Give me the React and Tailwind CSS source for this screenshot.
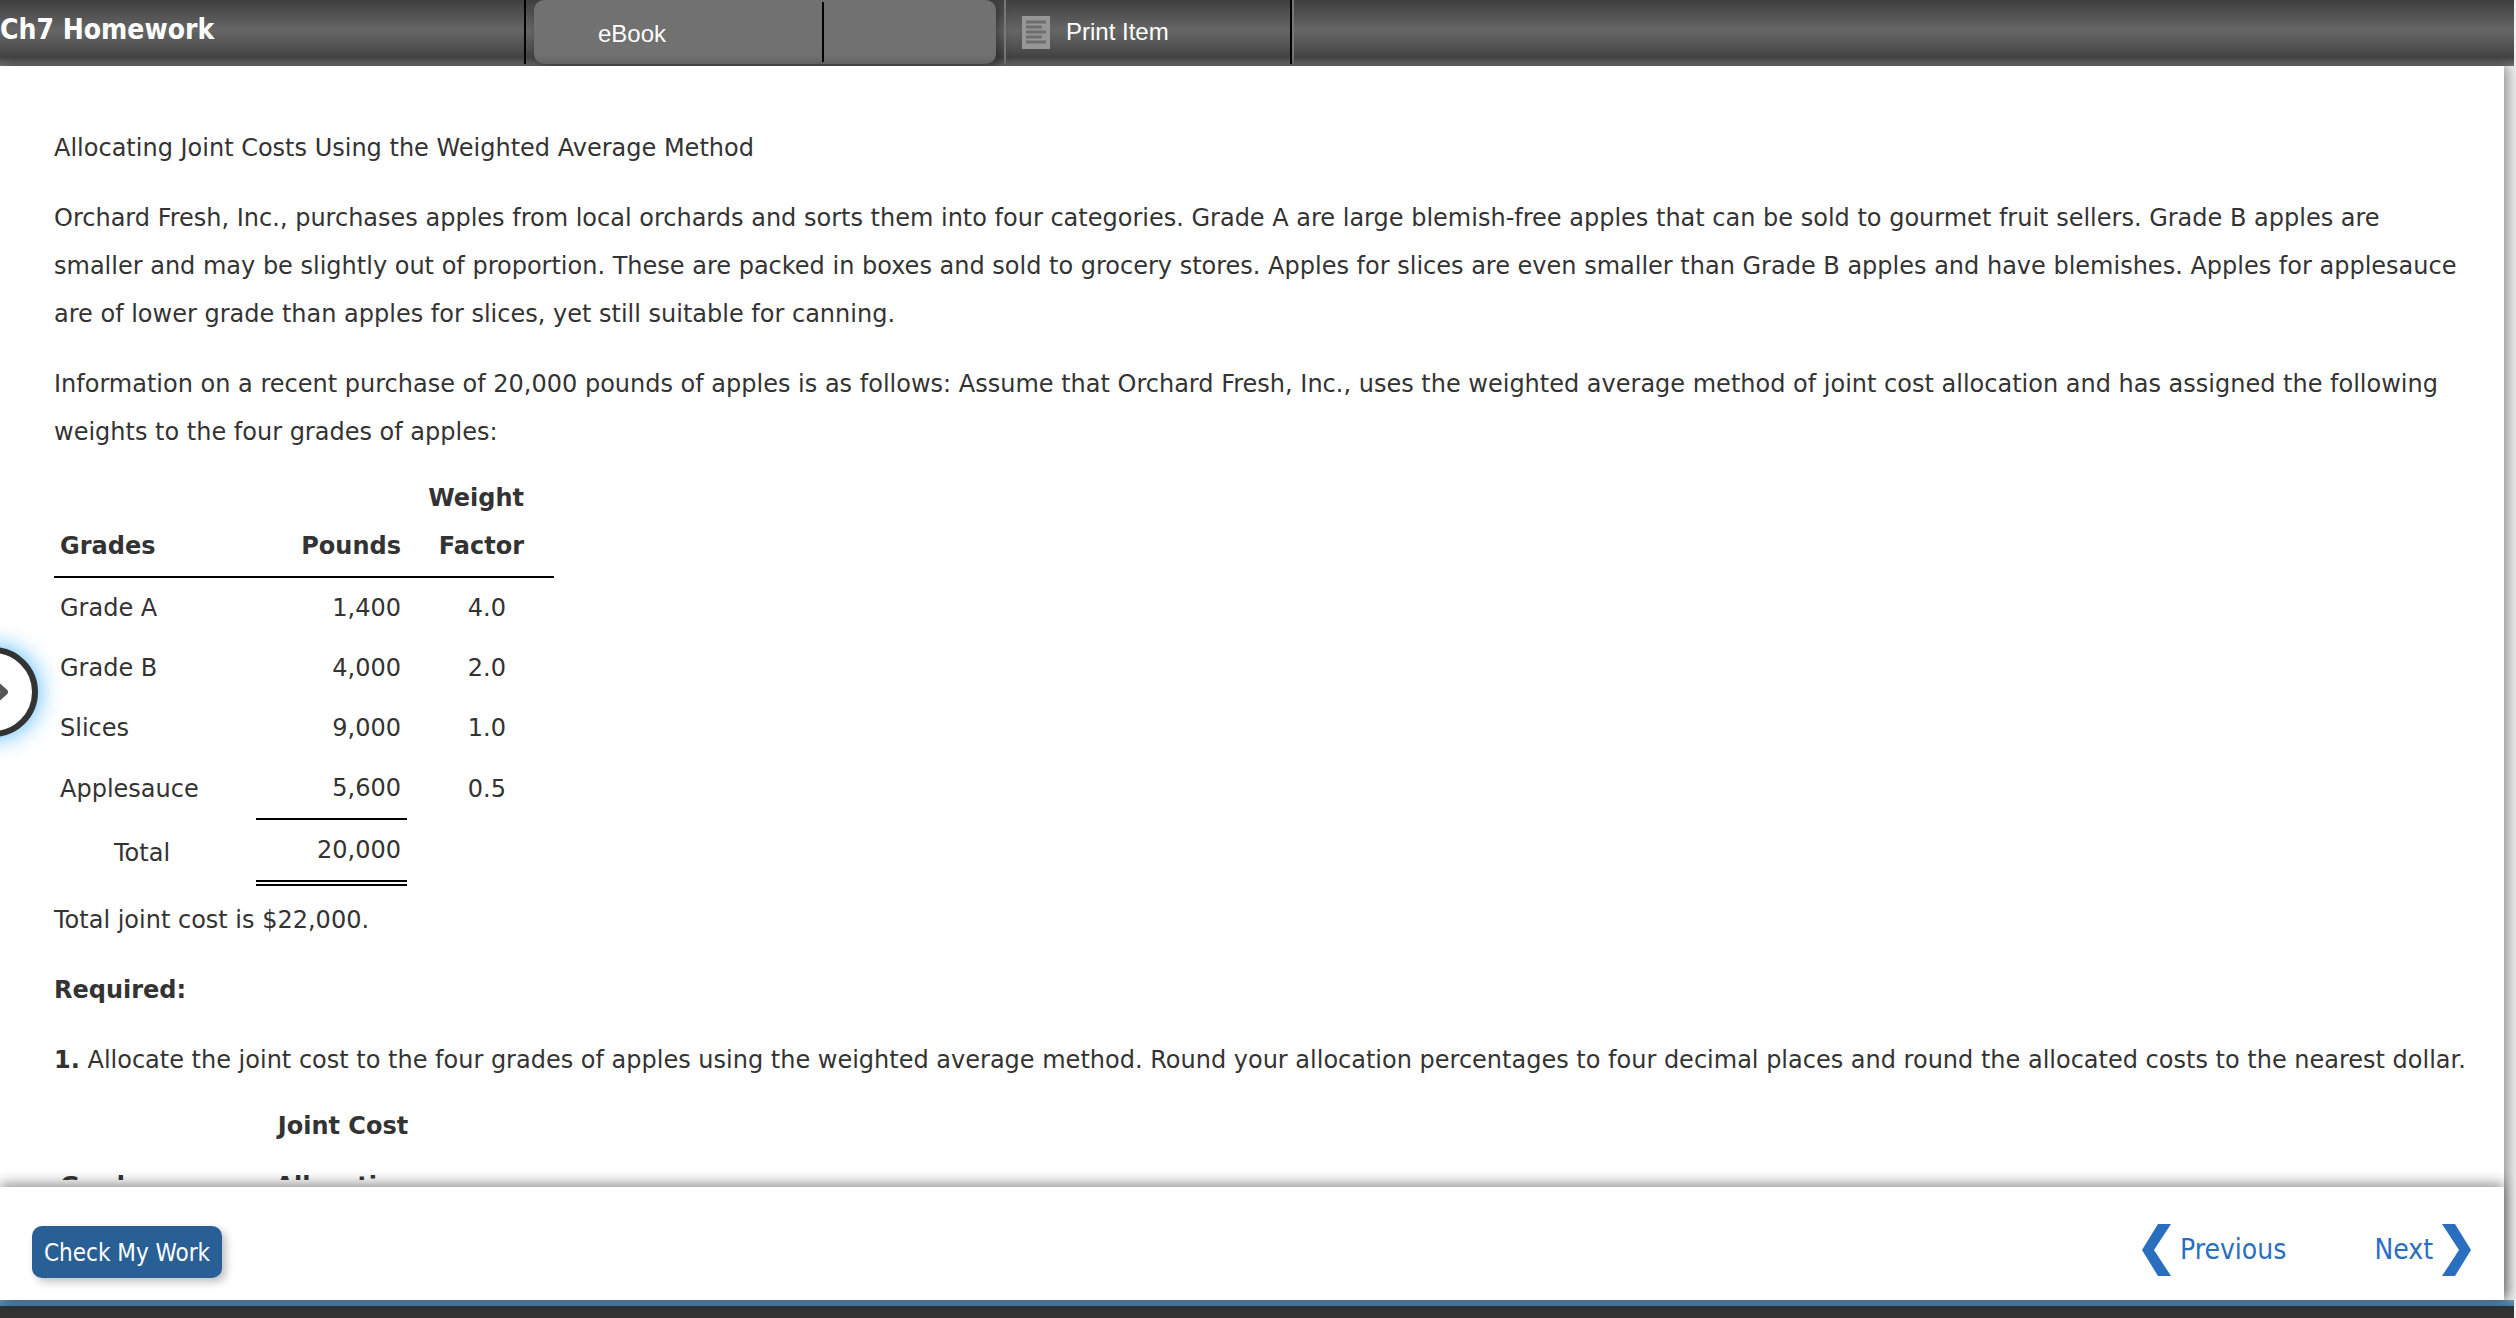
const GRADES = [
  { name: "Grade A", pounds: "1,400", weight: "4.0" },
  { name: "Grade B", pounds: "4,000", weight: "2.0" },
  { name: "Slices", pounds: "9,000", weight: "1.0" },
];

function PageIcon() {
  return (
    <svg viewBox="0 0 28 33" className="w-7 h-[33px]" aria-hidden="true">
      <rect width="28" height="33" fill="#979797" />
      <path d="M4 6h20M4 11h16M4 16h20M4 21h16M4 26h20" stroke="#6e6e6e" strokeWidth="3" fill="none" />
    </svg>
  );
}

function Chevron({ flip = false }) {
  return (
    <svg viewBox="0 0 29 52" className="w-[29px] h-[52px]" aria-hidden="true">
      <path d={flip ? "M0 0h13l16 26-16 26H0l17-26z" : "M29 0H16L0 26l16 26h13L12 26z"} fill="#2a6ebf" />
    </svg>
  );
}

function Header() {
  return (
    <header className="flex h-[66px] shrink-0 mr-[2px] bg-[linear-gradient(#3f3f3f_0%,#666_46%,#444_87%,#757575_100%)] text-white">
      <h1 className="w-[524px] pt-2 text-[28px] leading-[44px] font-bold font-['DejaVu_Sans_Condensed','DejaVu_Sans',sans-serif]">
        Ch7 Homework
      </h1>
      <nav className="flex h-16 text-2xl font-['Liberation_Sans',Arial,sans-serif]">
        <div className="flex border-l-2 border-black pl-2">
          <div className="flex w-[462px] rounded-[10px] bg-[#717171] shadow-[4px_4px_10px_rgba(0,0,0,0.35)]">
            <button type="button" className="w-[290px] my-[2px] pl-16 pt-1 text-left border-r-2 border-black">
              eBook
            </button>
          </div>
        </div>
        <button
          type="button"
          className="flex items-center w-[288px] ml-2 pl-4 gap-4 border-l-2 border-l-[#777] border-r-2 border-r-black"
        >
          <PageIcon />
          Print Item
        </button>
        <div className="border-l-2 border-[#777]" />
      </nav>
    </header>
  );
}

function GradesTable() {
  return (
    <table className="w-[500px] table-fixed border-collapse">
      <colgroup>
        <col className="w-[202px]" />
        <col className="w-[151px]" />
        <col />
      </colgroup>
      <thead>
        <tr className="align-bottom border-b-2 border-black">
          <th className="px-[6px] pb-[6px] text-left">Grades</th>
          <th className="px-[6px] pb-[6px] text-right">Pounds</th>
          <th className="pr-[30px] pb-[6px] text-right">
            Weight
            <br />
            Factor
          </th>
        </tr>
      </thead>
      <tbody className="text-right">
        {GRADES.map((g) => (
          <tr key={g.name}>
            <td className="px-[6px] py-[6px] text-left">{g.name}</td>
            <td className="px-[6px] py-[6px]">{g.pounds}</td>
            <td className="pr-12 py-[6px]">{g.weight}</td>
          </tr>
        ))}
        <tr>
          <td className="px-[6px] py-[6px] text-left">Applesauce</td>
          <td className="px-[6px] py-[6px] border-b-2 border-black">5,600</td>
          <td className="pr-12 py-[6px]">0.5</td>
        </tr>
        <tr>
          <td className="pl-[60px] py-[6px] text-left align-bottom">Total</td>
          <td className="px-[6px] py-[6px] border-b-6 border-double border-black">20,000</td>
          <td />
        </tr>
      </tbody>
    </table>
  );
}

export default function App() {
  return (
    <div className="flex flex-col h-screen overflow-hidden bg-[#f0f0f0] text-2xl text-[#333] font-['DejaVu_Sans',Verdana,sans-serif]">
      <Header />
      <div className="relative flex flex-col flex-1 min-h-0 mr-3 bg-white shadow-[4px_0_12px_rgba(0,0,0,0.4)]">
        <main className="flex-1 min-h-0 overflow-hidden pt-[58px] pl-[54px] pr-8 mb-[7px] leading-[48px]">
          <p className="mb-[22px]">Allocating Joint Costs Using the Weighted Average Method</p>
          <p className="mb-[22px]">
            Orchard Fresh, Inc., purchases apples from local orchards and sorts them into four categories. Grade A are
            large blemish-free apples that can be sold to gourmet fruit sellers. Grade B apples are smaller and may be
            slightly out of proportion. These are packed in boxes and sold to grocery stores. Apples for slices are even
            smaller than Grade B apples and have blemishes. Apples for applesauce are of lower grade than apples for
            slices, yet still suitable for canning.
          </p>
          <p className="mb-[18px]">
            Information on a recent purchase of 20,000 pounds of apples is as follows: Assume that Orchard Fresh, Inc.,
            uses the weighted average method of joint cost allocation and has assigned the following weights to the four
            grades of apples:
          </p>
          <GradesTable />
          <p className="mt-[10px] mb-[22px]">Total joint cost is $22,000.</p>
          <p className="mb-[22px] font-bold">Required:</p>
          <p className="mb-[18px]">
            <b>1.</b> Allocate the joint cost to the four grades of apples using the weighted average method. Round your
            allocation percentages to four decimal places and round the allocated costs to the nearest dollar.
          </p>
          <table className="w-[500px] table-fixed">
            <thead>
              <tr>
                <td className="w-[202px]" />
                <th className="w-[174px] pb-3">Joint Cost</th>
                <td />
              </tr>
              <tr>
                <th className="pl-[6px] text-left">Grades</th>
                <th>Allocation</th>
                <td />
              </tr>
            </thead>
          </table>
        </main>
        <footer className="relative flex items-center shrink-0 h-[113px] pl-8 pr-[33px] bg-white shadow-[0_-4px_12px_rgba(0,0,0,0.4)] font-['DejaVu_Sans_Condensed','DejaVu_Sans',sans-serif]">
          <button
            type="button"
            className="h-[52px] mt-[17px] px-3 pt-[2px] rounded-[10px] bg-[#286096] text-white shadow-[4px_4px_8px_rgba(0,0,0,0.25)]"
          >
            Check My Work
          </button>
          <a href="#previous" className="flex items-center gap-[9px] mt-3 ml-auto text-[28px] text-[#2a6ebf]">
            <Chevron />
            Previous
          </a>
          <a href="#next" className="flex items-center gap-[9px] mt-3 ml-[88px] text-[28px] text-[#2a6ebf]">
            Next
            <Chevron flip />
          </a>
        </footer>
        <button
          type="button"
          aria-label="Open panel"
          className="absolute top-[581px] left-[-52px] flex items-center justify-end size-[90px] pr-6 rounded-full border-6 border-[#333] bg-white shadow-[0_0_24px_#4ab4ff]"
        >
          <svg viewBox="0 0 16 24" className="w-4 h-6" aria-hidden="true">
            <path d="M3 3l10 9-10 9" fill="none" stroke="#555" strokeWidth="6" strokeLinejoin="round" />
          </svg>
        </button>
      </div>
      <div className="h-[18px] shrink-0 mr-[2px] bg-[#333]">
        <div className="h-[6px] bg-linear-to-b from-[#6f97b3] to-[#3f7fb2]" />
      </div>
    </div>
  );
}
